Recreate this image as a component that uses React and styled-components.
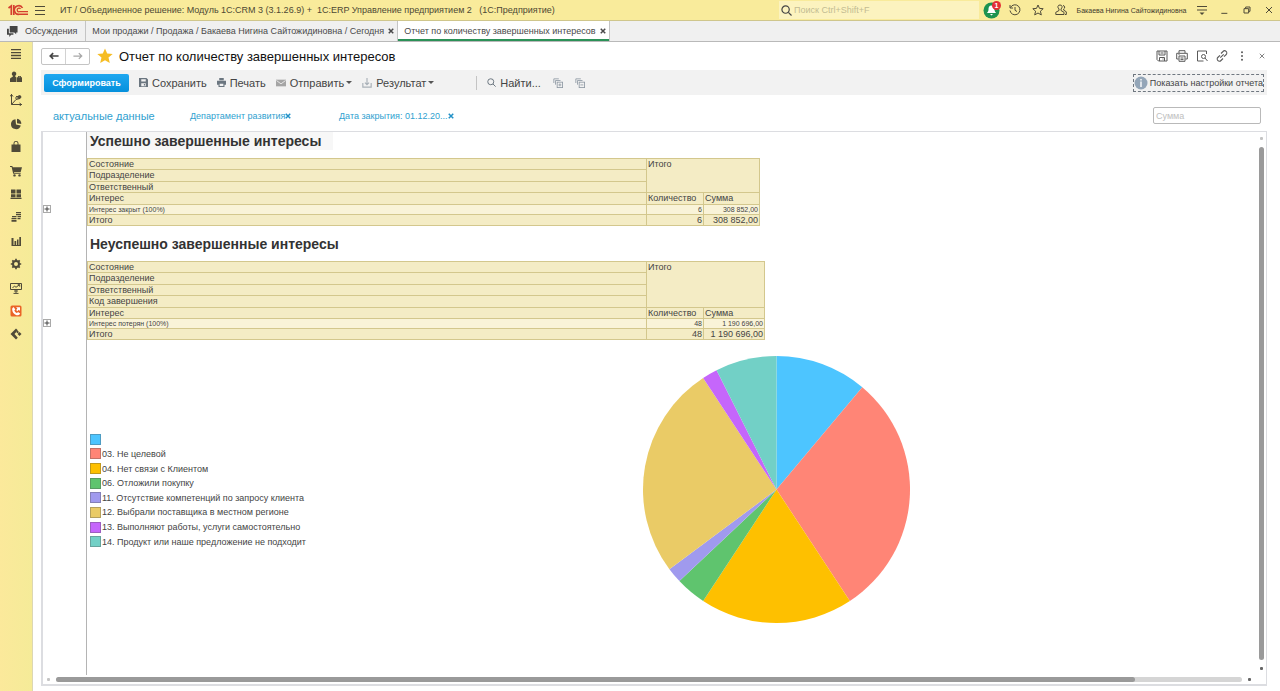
import React from "react";
import styled, { createGlobalStyle } from "styled-components";

const GlobalStyle = createGlobalStyle`
  *, *::before, *::after {
    box-sizing: border-box;
  }

  :root {
    --color-yellow: #f9eb9b;
    --color-bar: #f2f2f2;
    --color-text: #444444;
    --color-link: #2f9fd0;
    --color-frame: #dcdde1;
    --color-cell: #f4ecc5;
    --color-cell-light: #f9f3d8;
    --color-cell-border: #d3c78d;
  }

  body {
    margin: 0;
    background: #ffffff;
    color: var(--color-text);
    font-family: "Liberation Sans", Arial, sans-serif;
    font-size: 9px;
  }

  button, input {
    font-family: inherit;
    font-size: inherit;
    color: inherit;
  }
`;

const Page = styled.div`
  display: flex;
  flex-direction: column;
  height: 100vh;
  overflow: hidden;
`;

const TopBar = styled.header`
  display: flex;
  align-items: center;
  height: 21px;
  flex: none;
  padding-left: 8px;
  background: var(--color-yellow);
  border-bottom: 1px solid #cfc68c;
`;

const AppTitle = styled.div`
  flex: 1;
  padding-left: 8px;
  font-size: 9px;
  white-space: pre;
  color: #4d4833;
`;

const Search = styled.label`
  display: flex;
  align-items: center;
  gap: 2px;
  width: 200px;
  height: 18px;
  padding-left: 2px;
  background: #fcf3bf;

  input {
    flex: 1;
    min-width: 0;
    padding: 0;
    border: 0;
    outline: 0;
    background: none;
    font-size: 9px;
  }

  input::placeholder {
    color: #c3bc93;
  }
`;

const IconButton = styled.button`
  display: flex;
  align-items: center;
  justify-content: center;
  flex: none;
  width: ${({ $width = 23 }) => $width}px;
  height: 20px;
  padding: 0;
  border: 0;
  background: none;
  color: ${({ $color = "#4f4a38" }) => $color};
`;

const BellButton = styled(IconButton)`
  position: relative;
`;

const Badge = styled.span`
  position: absolute;
  top: 1px;
  right: 2px;
  width: 9px;
  height: 9px;
  border-radius: 50%;
  background: #e32f35;
  color: #ffffff;
  font-size: 7px;
  line-height: 9px;
  font-weight: bold;
`;

const UserName = styled.span`
  width: 119px;
  font-size: 7px;
  color: #3e3a2c;
  text-align: center;
  white-space: nowrap;
`;

const Tabs = styled.nav`
  display: flex;
  height: 21px;
  flex: none;
  background: #f0f0f0;
  border-bottom: 1px solid #b9b9b9;
`;

const Tab = styled.div`
  display: flex;
  align-items: center;
  gap: 4px;
  padding: 0 3px 0 6px;
  border-right: 1px solid #c4c4c4;
  background: ${({ $active }) => ($active ? "#ffffff" : "none")};
  box-shadow: ${({ $active }) => ($active ? "inset 0 -2px #2b9157" : "none")};
  white-space: nowrap;

  a {
    color: #4a4a4a;
    text-decoration: none;
  }
`;

const TalksTab = styled(Tab)`
  gap: 7px;
  padding: 0 8px 0 7px;
`;

const CloseButton = styled.button`
  display: flex;
  padding: 0;
  border: 0;
  background: none;
  color: ${({ $color = "#4a4a4a" }) => $color};
`;

const Body = styled.div`
  display: flex;
  flex: 1;
  min-height: 0;
`;

const Sidebar = styled.aside`
  width: 33px;
  flex: none;
  background: linear-gradient(90deg, #fbe99b, #f5eb98);
  border-right: 1px solid #dcd7b4;
`;

const SidebarMenu = styled.div`
  display: grid;
  grid-auto-rows: 1fr;
  justify-items: center;
  align-items: center;
  height: 304px;
`;

const Main = styled.main`
  display: flex;
  flex-direction: column;
  flex: 1;
  min-width: 0;
  padding: 0 13px 5px 8px;
`;

const Heading = styled.div`
  display: flex;
  align-items: center;
  height: 28px;
  flex: none;

  h1 {
    flex: 1;
    margin: 0 0 0 6px;
    color: #111111;
    font-size: 13px;
    font-weight: normal;
  }
`;

const HistoryButtons = styled.div`
  display: flex;
  width: 49px;
  height: 17px;
  margin-right: 7px;
  border: 1px solid #c4c4c4;
  border-radius: 2px;

  button {
    flex: 1;
    height: 15px;
  }

  button + button {
    border-left: 1px solid #d2d2d2;
  }
`;

const WindowActions = styled.div`
  display: flex;
  margin-right: -5px;
`;

const Toolbar = styled.div`
  display: flex;
  align-items: center;
  gap: 10px;
  height: 25px;
  flex: none;
  padding: 0 3px;
  background: var(--color-bar);
`;

const PrimaryButton = styled.button`
  width: 85px;
  height: 18px;
  padding: 0;
  border: 0;
  border-radius: 2px;
  background: linear-gradient(#1ea7f0, #0590dc);
  color: #ffffff;
  font-size: 9px;
  font-weight: bold;
`;

const ToolButton = styled.button`
  display: flex;
  align-items: center;
  gap: 4px;
  padding: 0;
  border: 0;
  background: none;
  font-size: 11px;
  white-space: nowrap;

  svg {
    color: ${({ $iconColor = "#6b7680" }) => $iconColor};
  }
`;

const Caret = styled.span`
  border: 3px solid transparent;
  border-top-color: #555555;
  border-bottom: 0;
  margin-left: -2px;
`;

const Divider = styled.div`
  width: 1px;
  height: 14px;
  margin-left: 32px;
  background: #c4c4c4;
`;

const SettingsButton = styled.button`
  display: flex;
  align-items: center;
  gap: 2px;
  height: 18px;
  margin-left: auto;
  padding: 0;
  border: 1px dashed #6f7780;
  background: none;
  font-size: 9px;
  white-space: nowrap;
`;

const Filters = styled.div`
  display: flex;
  align-items: center;
  height: 36px;
  flex: none;
  padding: 5px 6px 0 12px;
`;

const FilterName = styled.a`
  width: 137px;
  color: var(--color-link);
  font-size: 11px;
  text-decoration: none;
`;

const FilterChip = styled.div`
  display: flex;
  align-items: center;
  width: 149px;

  a {
    color: var(--color-link);
    text-decoration: none;
  }
`;

const SumInput = styled.input`
  width: 108px;
  height: 17px;
  margin-left: auto;
  padding: 0 2px;
  border: 1px solid #b9b9b9;
  border-radius: 2px;

  &::placeholder {
    color: #c0c0c0;
  }
`;

const Frame = styled.section`
  display: grid;
  grid-template: 1fr 9px / 1fr 9px;
  flex: 1;
  min-height: 0;
  border: 1px solid var(--color-frame);
  border-width: 1px 1px 2px 2px;
`;

const Sheet = styled.div`
  display: grid;
  grid-template: auto auto 1fr / 44px 1fr;
  min-width: 0;
  min-height: 0;
  overflow: hidden;
`;

const Gutter = styled.div`
  display: flex;
  align-items: flex-end;
  padding-bottom: ${({ $bottom = 12 }) => $bottom}px;
  border-right: 1px solid #b4b4b4;
`;

const ExpandButton = styled.button`
  display: flex;
  align-items: center;
  justify-content: center;
  width: 8px;
  height: 8px;
  padding: 0;
  border: 1px solid #a9a9a9;
  background: #ffffff;
`;

const SheetTitle = styled.h2`
  width: fit-content;
  margin: 0 0 8px;
  padding: 0 12px 0 3px;
  background: ${({ $selected }) => ($selected ? "#f7f7f7" : "none")};
  color: #333333;
  font-size: 14px;
  line-height: 18px;
`;

const ReportTable = styled.table`
  table-layout: fixed;
  border-collapse: collapse;
  width: ${({ $wide }) => ($wide ? 678 : 673)}px;
  margin-bottom: ${({ $wide }) => ($wide ? 0 : 9)}px;

  th, td {
    height: 11px;
    padding: 0 1px;
    border: 1px solid var(--color-cell-border);
    background: var(--color-cell);
    font-weight: normal;
    line-height: 10px;
    text-align: left;
    vertical-align: top;
    white-space: nowrap;
  }

  thead tr:nth-child(even) th:first-child {
    height: 12px;
  }

  td + td {
    text-align: right;
  }
`;

const GroupRow = styled.tr`
  td {
    height: 10px;
    padding: 0 1px;
    background: var(--color-cell-light);
    font-size: 7px;
    line-height: 9px;
  }
`;

const Chart = styled.div`
  display: flex;
  align-items: flex-start;
  padding: 16px 0 0 3px;
`;

const Legend = styled.ul`
  display: grid;
  grid-auto-rows: 1fr;
  align-items: center;
  width: 553px;
  height: 117px;
  margin: 76px 0 0;
  padding: 0;
  list-style: none;

  li {
    display: flex;
    align-items: center;
    gap: 1px;
  }
`;

const Swatch = styled.span`
  width: 11px;
  height: 11px;
  border: 1px solid rgba(80, 80, 80, 0.35);
  background: ${({ $color }) => $color};
`;

const VerticalScroll = styled.div`
  display: flex;
  flex-direction: column;
  align-items: center;
  justify-content: space-between;
  padding: 5px 0;

  span {
    flex: 1;
    width: 5px;
    margin: 7px 0;
    border-radius: 3px;
    background: #9a9a9a;
  }
`;

const HorizontalScroll = styled.div`
  display: flex;
  align-items: center;
  gap: 6px;
  padding: 0 6px 0 4px;
`;

const Track = styled.div`
  flex: 1;
  height: 5px;
  border-radius: 3px;
  background: #d5d5d5;

  span {
    display: block;
    width: 91%;
    height: 5px;
    border-radius: 3px;
    background: #9a9a9a;
  }
`;

const Arrow = styled.i`
  width: 3px;
  height: 3px;
  background: ${({ $faint }) => ($faint ? "#c4c4c4" : "#666666")};
  border-radius: 1px;
`;

const Icon = ({ size = 12, fill = "none", width = 1, children }) => (
  <svg
    width={size}
    height={size}
    viewBox="0 0 12 12"
    fill={fill}
    stroke={fill === "none" ? "currentColor" : "none"}
    strokeWidth={width}
    aria-hidden="true"
  >
    {children}
  </svg>
);

const Logo = () => (
  <svg width="20" height="12" viewBox="0 0 20 12" fill="none" stroke="#d5402f">
    <path d="M.5 4 3.300 2V11M5.800 11V1" strokeWidth="1.700" />
    <path d="M14.500 4A4.300 4.300 0 1 0 11.500 10.200H20" strokeWidth="1.600" />
    <path d="M12.500 5A1.800 1.800 0 1 0 11.500 7.700H20" strokeWidth="1.300" />
  </svg>
);

const Cross = ({ size = 6, width = 2 }) => (
  <Icon size={size} width={width * 1.5}>
    <path d="M1.500 1.500 10.500 10.500M10.500 1.500 1.500 10.500" />
  </Icon>
);

const SearchIcon = ({ size = 11 }) => (
  <Icon size={size} width={1.3}>
    <circle cx="5" cy="5" r="4" />
    <path d="m8 8 3.500 3.500" />
  </Icon>
);

const GroupIcon = ({ minus }) => (
  <Icon size={10}>
    <path d="M1 6V1h6M3 8V3h6" />
    <rect x="5" y="5" width="6.500" height="6.500" />
    <path d={minus ? "M6.500 8.300h3.500" : "M6.500 8.300h3.500M8.300 6.500V10"} />
  </Icon>
);

const menuItems = [
  {
    label: "Главное",
    icon: (
      <Icon width={1.3}>
        <path d="M1 1.700h10M1 4.600h10M1 7.500h10M1 10.400h10" />
      </Icon>
    ),
  },
  {
    label: "CRM",
    icon: (
      <Icon fill="currentColor">
        <path d="M4 .5a2.300 2.300 0 0 1 1.300 4.200v1l1.200.8V11H0V8.200c0-1.200 1.600-1.700 2.800-2.400V4.700A2.300 2.300 0 0 1 4 .5Z" />
        <path d="M7 6.300h1V5h3v1.300h1V11H7Zm1.700 0h1.600v-.6H8.700Z" />
      </Icon>
    ),
  },
  {
    label: "Планирование",
    icon: (
      <Icon>
        <path d="M1.500 0v10.500H12M1.500 10.500 6 5.500l4-1" />
        <path d="M0 2.500 1.500.500 3 2.500M9.500 9l2 1.500-2 1.500M5 4h4M6 2.500h5" />
        <circle cx="9.500" cy="3" r="1.400" fill="currentColor" />
      </Icon>
    ),
  },
  {
    label: "Отчеты",
    icon: (
      <Icon fill="currentColor">
        <path d="M5.500 1.200A5 5 0 1 0 10.800 7.500L6 6.500Z" />
        <path d="M7 .8A4.800 4.800 0 0 1 11.300 6L7 5.300Z" />
      </Icon>
    ),
  },
  {
    label: "Продажи",
    icon: (
      <Icon fill="currentColor">
        <path d="M1.500 3.500h9V11h-9Z" />
        <path d="M4 4V2.200a2 2 0 0 1 4 0V4" fill="none" stroke="currentColor" />
      </Icon>
    ),
  },
  {
    label: "Закупки",
    icon: (
      <Icon fill="currentColor">
        <path d="M0 1h2.300l.5 1.300H12L10.700 7H4l.2.800h6.500v1H3.200L1.600 2H0Z" />
        <circle cx="4.500" cy="10.400" r="1.200" />
        <circle cx="9.500" cy="10.400" r="1.200" />
      </Icon>
    ),
  },
  {
    label: "Склад",
    icon: (
      <Icon fill="currentColor">
        <path d="M1 1.500h4.500v4H1Zm5.500 0H11v4H6.500ZM1 6.300h4.500v3H1Zm5.500 0H11v3H6.500ZM.5 9.800h11V11H.5Z" />
      </Icon>
    ),
  },
  {
    label: "Финансы",
    icon: (
      <Icon fill="currentColor">
        <path d="M6 1h5v1.300H6Zm0 2h5v1.300H6Zm-4 2h4.500v1.300H2ZM7.500 5H11v1.300H7.500ZM1.500 7h5v1.300h-5Zm6 0h3v1.300h-3ZM1.500 9h5v1.800h-5Z" />
      </Icon>
    ),
  },
  {
    label: "Показатели",
    icon: (
      <Icon fill="currentColor">
        <path d="M1.500 3h2v7.500h-2Zm3 3h1.700v4.500H4.500ZM7 4.500h1.500v6H7ZM9.300 2H11v8.500H9.300ZM1.500 10H11v1H1.500Z" />
      </Icon>
    ),
  },
  {
    label: "Настройки",
    icon: (
      <Icon>
        <circle cx="6" cy="6" r="3" strokeWidth="2" />
        <path
          d="M6 .800v2M6 9.200v2M.800 6h2M9.200 6h2M2.300 2.300l1.300 1.300M8.400 8.400l1.300 1.300M2.300 9.700l1.300-1.300M8.400 3.600l1.300-1.300"
          strokeWidth="1.700"
        />
      </Icon>
    ),
  },
  {
    label: "Мониторинг",
    icon: (
      <Icon>
        <path d="M.500 1.500h11v6H.500ZM6 7.500V11M3.500 11.400h5M4 9h4M2.500 6 4.500 4l1.500 1.300L9.500 2.700M7.700 2.700h2v2" />
      </Icon>
    ),
  },
  {
    label: "Телефония",
    icon: (
      <Icon fill="currentColor">
        <rect x=".5" y=".5" width="11" height="11" rx="1.500" fill="#ea6427" />
        <path d="M2.200 4.500c0-2 1-2.300 1.600-2.300l1.500 2.200-1 1C5 7 6 7.800 7 8l1-1 2.200 1.500C9.500 10.300 8 10.300 7.500 10.300 5 10.300 2.200 7.500 2.200 4.500Z" fill="#ffffff" />
        <path d="M6 2.200h4V6L8.800 4.800 7.300 6.200 6.200 5 7.400 3.600Z" fill="#ffffff" />
      </Icon>
    ),
  },
  {
    label: "Интеграции",
    icon: (
      <Icon fill="currentColor">
        <path d="M6 .5 7.800 2.300 4.500 6l3.300 3.700L6 11.500.5 6Z" />
        <path d="M9.500 4 11.500 6l-2 2-2-2ZM7.500 2.500 9 4 7.500 5.300 6.200 4Z" />
      </Icon>
    ),
  },
];

const windowActions = [
  {
    label: "Сохранить файл",
    icon: (
      <Icon>
        <path d="M1 1h10v10H2.500L1 9.500ZM3 1v4h6V1M3.500 11V7.500h5V11M4.500 3h3M6.500 9h1" />
      </Icon>
    ),
  },
  {
    label: "Печать",
    icon: (
      <Icon>
        <path d="M3 3V.7h6V3M2.500 9H.700V3.300h10.600V9H9.500M3 6h6v5.300H3ZM4.500 8h3M4.500 9.600h3M2.500 4.700h1" />
      </Icon>
    ),
  },
  {
    label: "Предварительный просмотр",
    icon: (
      <Icon>
        <path d="M10.500 4V1h-9v10h6" />
        <circle cx="7.500" cy="6.500" r="2" />
        <path d="m9 8 2.500 3" />
      </Icon>
    ),
  },
  {
    label: "Получить ссылку",
    icon: (
      <Icon width={1.1}>
        <path d="M5 3.500 7 1.500a2 2 0 0 1 3.200 3L8 6.700M7 8.500l-2 2a2 2 0 0 1-3.200-3L4 5.300M4.300 7.700l3.400-3.400" />
      </Icon>
    ),
  },
  {
    label: "Еще",
    icon: (
      <Icon fill="currentColor">
        <circle cx="6" cy="2.200" r="1" />
        <circle cx="6" cy="6" r="1" />
        <circle cx="6" cy="9.800" r="1" />
      </Icon>
    ),
  },
  { label: "Закрыть", icon: <Cross size={6} width={1} /> },
];

const reasons = [
  { name: "", count: 6, color: "#4dc5ff" },
  { name: "03. Не целевой", count: 16, color: "#ff8576" },
  { name: "04. Нет связи с Клиентом", count: 10, color: "#fec000" },
  { name: "06. Отложили покупку", count: 2, color: "#5fc46e" },
  { name: "11. Отсутствие компетенций по запросу клиента", count: 1, color: "#a09aee" },
  { name: "12. Выбрали поставщика в местном регионе", count: 14, color: "#eacb66" },
  { name: "13. Выполняют работы, услуги самостоятельно", count: 1, color: "#c566fb" },
  { name: "14. Продукт или наше предложение не подходит", count: 4, color: "#72d0c6" },
];

const Pie = ({ data, size }) => {
  const total = data.reduce((sum, { count }) => sum + count, 0);
  const r = size / 2;
  const point = (value) => {
    const angle = (value / total) * 2 * Math.PI;
    return `${r + r * Math.sin(angle)} ${r - r * Math.cos(angle)}`;
  };
  let start = 0;

  return (
    <svg width={size} height={size} role="img" aria-label="Причины завершения">
      {data.map(({ name, count, color }) => {
        const from = start;
        start += count;
        return (
          <path
            key={name}
            fill={color}
            d={`M${r} ${r}L${point(from)}A${r} ${r} 0 0 1 ${point(start)}Z`}
          />
        );
      })}
    </svg>
  );
};

const Report = ({ groups, state, count, sum, wide }) => (
  <ReportTable $wide={wide}>
    <colgroup>
      <col style={{ width: 559 }} />
      <col style={{ width: 57 }} />
      <col />
    </colgroup>
    <thead>
      {groups.map((group, i) => (
        <tr key={group}>
          <th>{group}</th>
          {i === 0 && (
            <th colSpan={2} rowSpan={groups.length}>
              Итого
            </th>
          )}
        </tr>
      ))}
      <tr>
        <th>Интерес</th>
        <th>Количество</th>
        <th>Сумма</th>
      </tr>
    </thead>
    <tbody>
      <GroupRow>
        <td>{state}</td>
        <td>{count}</td>
        <td>{sum}</td>
      </GroupRow>
      <tr>
        <td>Итого</td>
        <td>{count}</td>
        <td>{sum}</td>
      </tr>
    </tbody>
  </ReportTable>
);

const Expand = () => (
  <ExpandButton aria-label="Развернуть">
    <Icon size={6} width={2}>
      <path d="M1 6h10M6 1v10" />
    </Icon>
  </ExpandButton>
);

const Header = () => (
  <TopBar>
    <Logo />
    <IconButton $width={24} aria-label="Меню">
      <Icon width={1.1}>
        <path d="M1 2.500h10M1 6.500h10M1 10.500h10" />
      </Icon>
    </IconButton>
    <AppTitle>
      {"ИТ / Объединенное решение: Модуль 1С:CRM 3 (3.1.26.9) +  1С:ERP Управление предприятием 2   (1С:Предприятие)"}
    </AppTitle>
    <Search>
      <SearchIcon />
      <input aria-label="Поиск" placeholder="Поиск Ctrl+Shift+F" />
    </Search>
    <BellButton $width={24} aria-label="Уведомления">
      <svg width="17" height="17" viewBox="0 0 17 17">
        <circle cx="8.500" cy="8.500" r="8" fill="#1d9350" />
        <path d="M8.500 3.500c-2.500 0-3 2-3 4S4.500 10 4 11h9c-.5-1-1.500-1.500-1.500-3.500s-.5-4-3-4ZM7 12h3l-1.500 1.500Z" fill="#fff" />
      </svg>
      <Badge>1</Badge>
    </BellButton>
    <IconButton aria-label="История">
      <Icon>
        <path d="M1.500 3.500A5 5 0 1 1 1 6.500M1 1v3h3M6 3v3.300l2 1.200" />
      </Icon>
    </IconButton>
    <IconButton aria-label="Избранное">
      <Icon>
        <path d="m6 1 1.500 3.400 3.700.3-2.800 2.500.9 3.700L6 9l-3.300 1.900.9-3.700L.8 4.700l3.700-.3Z" />
      </Icon>
    </IconButton>
    <IconButton aria-label="Пользователи">
      <Icon>
        <path d="M5 1a2 2 0 0 1 1 3.800V6.500l3 1.800v2.200H.800V8.300L4 6.500V4.800A2 2 0 0 1 5 1ZM8 1.500a1.800 1.800 0 0 1 .7 3.400v1.200l2.600 1.700v2.700H10" />
      </Icon>
    </IconButton>
    <UserName>Бакаева Нигина Сайтожидиновна</UserName>
    <IconButton $width={22} aria-label="Настройка окна">
      <Icon>
        <path d="M1 2.500h10M1 6h10" />
        <path d="M3.500 8.500h5L6 11Z" fill="currentColor" stroke="none" />
      </Icon>
    </IconButton>
    <IconButton $width={22} aria-label="Свернуть">
      <Icon size={8}>
        <path d="M2 11h9" strokeWidth="1.500" />
      </Icon>
    </IconButton>
    <IconButton $width={23} aria-label="Развернуть окно">
      <Icon size={8} width={1.5}>
        <path d="M1.500 4h7v6.500h-7ZM4 4V1.500h6.500V8H8.500" />
      </Icon>
    </IconButton>
    <IconButton $width={22} aria-label="Закрыть окно">
      <Cross size={8} width={1} />
    </IconButton>
  </TopBar>
);

export default function App() {
  return (
    <Page>
      <GlobalStyle />
      <Header />
      <Tabs>
        <TalksTab>
          <Icon size={11} fill="currentColor">
            <path d="M3 0h8.500v7H10v2L8 7H3Z" />
            <path d="M0 3h2v5h5v1.500H4.500l-2 2.500V9.500H0Z" />
          </Icon>
          <a href="#talks">Обсуждения</a>
        </TalksTab>
        <Tab>
          <a href="#sales">
            Мои продажи / Продажа / Бакаева Нигина Сайтожидиновна / Сегодня
          </a>
          <CloseButton aria-label="Закрыть вкладку">
            <Cross />
          </CloseButton>
        </Tab>
        <Tab $active>
          <a href="#report">Отчет по количеству завершенных интересов</a>
          <CloseButton aria-label="Закрыть вкладку">
            <Cross />
          </CloseButton>
        </Tab>
      </Tabs>
      <Body>
        <Sidebar>
          <SidebarMenu>
            {menuItems.map(({ label, icon }) => (
              <IconButton key={label} aria-label={label}>
                {icon}
              </IconButton>
            ))}
          </SidebarMenu>
        </Sidebar>
        <Main>
          <Heading>
            <HistoryButtons>
              <IconButton aria-label="Назад" $color="#444444">
                <Icon size={10} width={2}>
                  <path d="M11.500 6H1.500M5 2.500 1.500 6 5 9.500" />
                </Icon>
              </IconButton>
              <IconButton aria-label="Вперед" $color="#a8a8a8">
                <Icon size={10} width={1.5}>
                  <path d="M.500 6h10M7 2.500 10.500 6 7 9.500" />
                </Icon>
              </IconButton>
            </HistoryButtons>
            <svg width="16" height="16" viewBox="0 0 16 16">
              <path
                d="m8 .5 2.200 5 5.500.5-4.200 3.600 1.300 5.400L8 12.200 3.200 15l1.300-5.400L.3 6l5.500-.5Z"
                fill="#f6bd24"
              />
            </svg>
            <h1>Отчет по количеству завершенных интересов</h1>
            <WindowActions>
              {windowActions.map(({ label, icon }) => (
                <IconButton key={label} $width={20} $color="#5a5a5a" aria-label={label}>
                  {icon}
                </IconButton>
              ))}
            </WindowActions>
          </Heading>
          <Toolbar>
            <PrimaryButton>Сформировать</PrimaryButton>
            <ToolButton>
              <Icon size={9} fill="currentColor">
                <path
                  fillRule="evenodd"
                  d="M0 0h10l2 2v10H0ZM3 1.500v3h6v-3ZM3 7v4h6V7Zm3.500 1H8v2H6.500Z"
                />
              </Icon>
              Сохранить
            </ToolButton>
            <ToolButton>
              <Icon size={9} fill="currentColor">
                <path
                  fillRule="evenodd"
                  d="M3 0h6v3H3ZM0 3.500h12V9h-2v3H2V9H0ZM3.500 7.500v3h5v-3Z"
                />
              </Icon>
              Печать
            </ToolButton>
            <ToolButton $iconColor="#a5a5a5">
              <Icon size={10} fill="currentColor">
                <path d="M0 2h12v8H0Z" />
                <path d="m.5 3 5.500 4 5.500-4" fill="none" stroke="#f2f2f2" />
              </Icon>
              Отправить
              <Caret />
            </ToolButton>
            <ToolButton $iconColor="#a9b1b8">
              <Icon size={10} width={1.4}>
                <path d="M1 6v5h10V6M6 0v8M3.500 5.500 6 8l2.500-2.500" />
              </Icon>
              Результат
              <Caret />
            </ToolButton>
            <Divider />
            <ToolButton>
              <SearchIcon size={9} />
              Найти...
            </ToolButton>
            <IconButton $width={14} $color="#8e99a3" aria-label="Развернуть группы">
              <GroupIcon />
            </IconButton>
            <IconButton $width={10} $color="#8e99a3" aria-label="Свернуть группы">
              <GroupIcon minus />
            </IconButton>
            <SettingsButton>
              <svg width="14" height="14" viewBox="0 0 14 14">
                <circle cx="7" cy="7" r="6.500" fill="#94a6b8" />
                <path d="M6.300 3h1.400v1.500H6.300Zm0 2.500h1.400V11H6.300Z" fill="#fff" />
              </svg>
              Показать настройки отчета
            </SettingsButton>
          </Toolbar>
          <Filters>
            <FilterName href="#actual">актуальные данные</FilterName>
            <FilterChip>
              <a href="#department">Департамент развития</a>
              <CloseButton $color="#2291c7" aria-label="Убрать отбор">
                <Cross width={2} />
              </CloseButton>
            </FilterChip>
            <FilterChip>
              <a href="#date">Дата закрытия: 01.12.20...</a>
              <CloseButton $color="#2291c7" aria-label="Убрать отбор">
                <Cross width={2} />
              </CloseButton>
            </FilterChip>
            <SumInput aria-label="Сумма" placeholder="Сумма" />
          </Filters>
          <Frame>
            <Sheet>
              <Gutter $bottom={22}>
                <Expand />
              </Gutter>
              <div>
                <SheetTitle $selected>Успешно завершенные интересы</SheetTitle>
                <Report
                  groups={["Состояние", "Подразделение", "Ответственный"]}
                  state="Интерес закрыт (100%)"
                  count={6}
                  sum="308 852,00"
                />
              </div>
              <Gutter $bottom={13}>
                <Expand />
              </Gutter>
              <div>
                <SheetTitle>Неуспешно завершенные интересы</SheetTitle>
                <Report
                  wide
                  groups={["Состояние", "Подразделение", "Ответственный", "Код завершения"]}
                  state="Интерес потерян (100%)"
                  count={48}
                  sum="1 190 696,00"
                />
              </div>
              <Gutter />
              <Chart>
                <Legend>
                  {reasons.map(({ name, color }) => (
                    <li key={name}>
                      <Swatch $color={color} />
                      {name}
                    </li>
                  ))}
                </Legend>
                <Pie data={reasons} size={267} />
              </Chart>
            </Sheet>
            <VerticalScroll>
              <Arrow $faint />
              <span />
              <Arrow />
            </VerticalScroll>
            <HorizontalScroll>
              <Arrow $faint />
              <Track>
                <span />
              </Track>
              <Arrow />
            </HorizontalScroll>
          </Frame>
        </Main>
      </Body>
    </Page>
  );
}
